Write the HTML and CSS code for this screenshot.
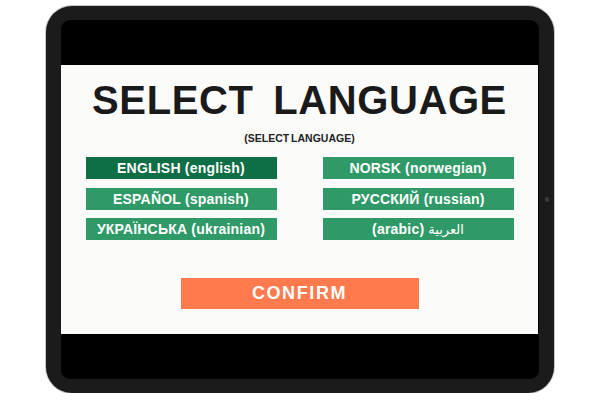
FILE: index.html
```html
<!DOCTYPE html>
<html>
<head>
<meta charset="utf-8">
<link rel="stylesheet" href="styles.css">
</head>
<body>
<div class="device">
  <div class="bezel">
    <div class="screen">
      <h1 class="title">SELECT LANGUAGE</h1>
      <p class="subtitle">(SELECT LANGUAGE)</p>
      <div class="langs">
        <button class="lang lang-active">ENGLISH (english)</button>
        <button class="lang">NORSK (norwegian)</button>
        <button class="lang">ESPAÑOL (spanish)</button>
        <button class="lang">РУССКИЙ (russian)</button>
        <button class="lang">УКРАЇНСЬКА (ukrainian)</button>
        <button class="lang">(arabic) <span class="arabic">العربية</span></button>
      </div>
      <button class="confirm">CONFIRM</button>
    </div>
  </div>
  <span class="camera"></span>
</div>
</body>
</html>
```
FILE: styles.css
```css
html, body {
  margin: 0;
  padding: 0;
  background: #ffffff;
}
body {
  padding-top: 6px;
  font-family: "Liberation Sans", Arial, sans-serif;
}
.device {
  position: relative;
  width: 508px;
  height: 387px;
  margin: 0 auto;
  box-sizing: border-box;
  padding: 14px 15px;
  background: #1b1b1b;
  border-radius: 26px;
  box-shadow: 0 0 0 1px #c8c8c8;
}
.bezel {
  height: 100%;
  box-sizing: border-box;
  background: #000;
  border-radius: 9px;
  padding: 45px 1px 45px 0;
}
.screen {
  height: 100%;
  background: #fbfbfa;
  display: flex;
  flex-direction: column;
  align-items: center;
  padding-top: 15px;
  box-sizing: border-box;
}
.title {
  margin: 0;
  font-size: 40px;
  line-height: 40px;
  font-weight: 700;
  color: #1a1a1a;
  letter-spacing: 0.6px;
  word-spacing: 8px;
}
.subtitle {
  margin: 12px 0 0;
  font-size: 10.5px;
  line-height: 12px;
  font-weight: 700;
  color: #222;
  word-spacing: -1px;
}
.langs {
  margin-top: 13px;
  display: grid;
  grid-template-columns: 191px 191px;
  column-gap: 46px;
  row-gap: 8.5px;
}
.lang {
  height: 22px;
  border: 0;
  padding: 0;
  margin: 0;
  background: #2f9a67;
  color: #fff;
  font-family: "Liberation Sans", "DejaVu Sans", Arial, sans-serif;
  font-size: 14px;
  line-height: 22px;
  font-weight: 700;
  letter-spacing: 0.2px;
  text-align: center;
}
.arabic {
  font-family: "DejaVu Sans", sans-serif;
  font-weight: 400;
  font-size: 13px;
  letter-spacing: 0;
}
.lang-active {
  background: #0e6e45;
}
.confirm {
  margin-top: 38px;
  width: 238px;
  height: 31px;
  border: 0;
  padding: 0;
  background: #ff7b4d;
  color: #fff;
  font-family: "Liberation Sans", Arial, sans-serif;
  font-size: 18px;
  line-height: 31px;
  font-weight: 700;
  letter-spacing: 1.6px;
}
.camera {
  position: absolute;
  left: 499px;
  top: 191px;
  width: 4px;
  height: 5px;
  border-radius: 2px;
  background: #3a3a3a;
}
```
